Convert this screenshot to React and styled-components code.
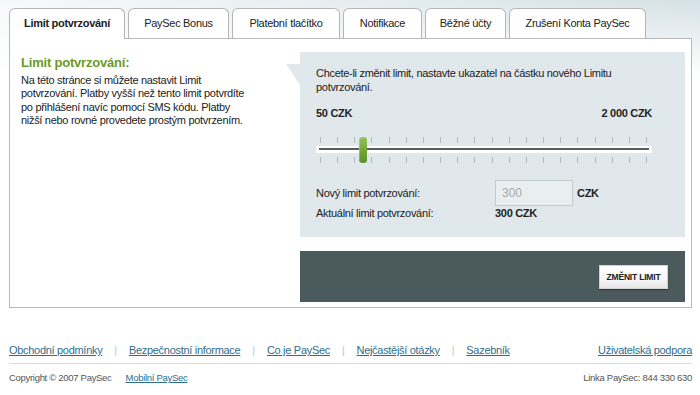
import styled, { createGlobalStyle } from "styled-components";

const GlobalStyle = createGlobalStyle`
    html, body {
        margin: 0;
        padding: 0;
    }
    body {
        font-family: "Liberation Sans", Arial, sans-serif;
        font-size: 11px;
        letter-spacing: -0.3px;
        color: #222;
        background:
            linear-gradient(to bottom, rgba(255, 255, 255, 0) 0, #fff 75px),
            linear-gradient(to right, #f6f9fa 0, #e4ecef 55%, #d5e1e6 100%);
        background-repeat: no-repeat;
        background-color: #fff;
    }
`;

const Page = styled.div`
    width: 700px;
    height: 395px;
    box-sizing: border-box;
    padding: 8px 8px 0 9px;
`;

const Tabs = styled.div`
    display: flex;
    gap: 3px;
    height: 30px;
    align-items: flex-start;
`;

const Tab = styled.div`
    position: relative;
    z-index: 1;
    width: ${(p) => p.$w}px;
    height: ${(p) => (p.$active ? 31 : 30)}px;
    box-sizing: border-box;
    border: 1px solid #b5b5b5;
    border-bottom: none;
    border-radius: 6px 6px 0 0;
    background: #fff;
    display: flex;
    align-items: center;
    justify-content: center;
    padding-bottom: ${(p) => (p.$active ? 2 : 1)}px;
    font-weight: ${(p) => (p.$active ? "bold" : "normal")};
    color: #222;
    white-space: nowrap;
`;

const Box = styled.div`
    height: 270px;
    box-sizing: border-box;
    border: 1px solid #b8b8b8;
    background: #fff;
    display: flex;
    padding: 13px 6px 0 11px;
`;

const Intro = styled.div`
    flex: 1;
    padding-top: 3px;
`;

const IntroTitle = styled.h2`
    margin: 0 0 3px;
    font-size: 13px;
    line-height: 16px;
    letter-spacing: -0.2px;
    color: #6b9a27;
    font-weight: bold;
`;

// line breaks kept as on the original page
const IntroText = styled.p`
    margin: 0;
    white-space: nowrap;
    line-height: 13.4px;
    color: #222;
`;

const Side = styled.div`
    width: 385px;
    display: flex;
    flex-direction: column;
    gap: 14px;
`;

const LimitPanel = styled.div`
    position: relative;
    height: 185px;
    box-sizing: border-box;
    background: #e1e8eb;
    padding: 14px 33px 0 16px;

    &::before {
        content: "";
        position: absolute;
        left: -14px;
        top: 12px;
        width: 14px;
        height: 21px;
        background: #e1e8eb;
        clip-path: polygon(0 0, 100% 0, 100% 100%);
    }
`;

const PanelText = styled.p`
    margin: 0;
    line-height: 14px;
    color: #222;
`;

const Range = styled.div`
    display: flex;
    justify-content: space-between;
    margin-top: 12px;
    font-weight: bold;
    line-height: 14px;
    color: #222;
`;

const Slider = styled.div`
    position: relative;
    margin-top: 17px;
    height: 26px;
    display: flex;
    flex-direction: column;
`;

const Ticks = styled.div`
    display: flex;
    justify-content: space-between;
    padding: 0 5px 0 4px;
    height: 6px;
    margin-top: ${(p) => p.$top || 0}px;
`;

const Tick = styled.span`
    width: 1px;
    height: 100%;
    background: #b3b9bc;
`;

const Track = styled.div`
    margin-top: 3px;
    height: 7px;
    box-sizing: border-box;
    background: #fff;
    padding: 2px 3px 0 3px;
`;

const TrackLine = styled.div`
    height: 2px;
    background: #5c5c5c;
`;

const Thumb = styled.div`
    position: absolute;
    left: 43px;
    top: 0;
    width: 8px;
    height: 26px;
    border-radius: 3px;
    background: linear-gradient(to bottom, #94c55c 0%, #77ab3c 45%, #5a9128 100%);
    box-shadow: inset 1px 0 0 rgba(255, 255, 255, 0.25);
`;

const FormRow = styled.div`
    display: flex;
    align-items: center;
    line-height: 14px;
    margin-top: ${(p) => p.$top || 0}px;
`;

const Label = styled.span`
    width: 179px;
    color: #222;
`;

const Amount = styled.input`
    width: 78px;
    height: 26px;
    box-sizing: border-box;
    border: 1px solid #c3cbce;
    background: #e9eef0;
    color: #a9a9a9;
    font-family: "Liberation Sans", Arial, sans-serif;
    font-size: 12px;
    padding: 0 6px;
    margin: 0;
    outline: none;
`;

const Unit = styled.span`
    margin-left: 4px;
    font-weight: bold;
`;

const Value = styled.span`
    font-weight: bold;
`;

const ActionBar = styled.div`
    height: 50px;
    background: #4b5a5c;
    display: flex;
    align-items: center;
    justify-content: flex-end;
    padding: 1px 17px 0 0;
`;

const Button = styled.button`
    width: 69px;
    height: 24px;
    border: 1px solid #d2d2d2;
    background: linear-gradient(to bottom, #ffffff 0%, #f6f6f6 60%, #e6e6e6 100%);
    box-shadow: 0 1px 1px rgba(0, 0, 0, 0.35);
    font-family: "Liberation Sans", Arial, sans-serif;
    font-size: 8.5px;
    font-weight: bold;
    letter-spacing: -0.2px;
    color: #222;
    padding: 0;
    cursor: pointer;
`;

const FooterLinks = styled.div`
    display: flex;
    align-items: center;
    padding: 35px 0 6px;
    line-height: 14px;
    letter-spacing: -0.3px;
    border-bottom: 1px solid #dcdcdc;
`;

const FooterLink = styled.a`
    color: #2f6d8c;
    text-decoration: underline;
    cursor: pointer;
    margin-left: ${(p) => (p.$right ? "auto" : "0")};
`;

const Sep = styled.span`
    color: #c6c6c6;
    margin: 0 12px;
`;

const FooterMeta = styled.div`
    display: flex;
    align-items: center;
    margin-top: 8px;
    line-height: 12px;
    font-size: 9.5px;
    color: #555;
`;

const MetaLink = styled(FooterLink)`
    margin-left: 14px;
`;

const Hotline = styled.span`
    margin-left: auto;
`;

const tabs = [
    { label: "Limit potvrzování", w: 116, active: true },
    { label: "PaySec Bonus", w: 101 },
    { label: "Platební tlačítko", w: 108 },
    { label: "Notifikace", w: 79 },
    { label: "Běžné účty", w: 81 },
    { label: "Zrušení Konta PaySec", w: 137 },
];

const links = [
    "Obchodní podmínky",
    "Bezpečnostní informace",
    "Co je PaySec",
    "Nejčastější otázky",
    "Sazebník",
];

const App = () => {
    const ticks = Array.from({ length: 20 });

    return (
        <Page>
            <GlobalStyle />
            <Tabs>
                {tabs.map((t) => (
                    <Tab key={t.label} $w={t.w} $active={t.active}>
                        {t.label}
                    </Tab>
                ))}
            </Tabs>
            <Box>
                <Intro>
                    <IntroTitle>Limit potvrzování:</IntroTitle>
                    <IntroText>
                        Na této stránce si můžete nastavit Limit
                        <br />
                        potvrzování. Platby vyšší než tento limit potvrdíte
                        <br />
                        po přihlášení navíc pomocí SMS kódu. Platby
                        <br />
                        nižší nebo rovné provedete prostým potvrzením.
                    </IntroText>
                </Intro>
                <Side>
                    <LimitPanel>
                        <PanelText>
                            Chcete-li změnit limit, nastavte ukazatel na částku nového Limitu
                            potvrzování.
                        </PanelText>
                        <Range>
                            <span>50 CZK</span>
                            <span>2 000 CZK</span>
                        </Range>
                        <Slider>
                            <Ticks>
                                {ticks.map((_, i) => (
                                    <Tick key={i} />
                                ))}
                            </Ticks>
                            <Track>
                                <TrackLine />
                            </Track>
                            <Ticks $top={4}>
                                {ticks.map((_, i) => (
                                    <Tick key={i} />
                                ))}
                            </Ticks>
                            <Thumb />
                        </Slider>
                        <FormRow $top={17}>
                            <Label>Nový limit potvrzování:</Label>
                            <Amount defaultValue="300" readOnly />
                            <Unit>CZK</Unit>
                        </FormRow>
                        <FormRow $top={0}>
                            <Label>Aktuální limit potvrzování:</Label>
                            <Value>300 CZK</Value>
                        </FormRow>
                    </LimitPanel>
                    <ActionBar>
                        <Button>ZMĚNIT LIMIT</Button>
                    </ActionBar>
                </Side>
            </Box>
            <FooterLinks>
                {links.map((l, i) => (
                    <span key={l}>
                        {i > 0 && <Sep>|</Sep>}
                        <FooterLink>{l}</FooterLink>
                    </span>
                ))}
                <FooterLink $right>Uživatelská podpora</FooterLink>
            </FooterLinks>
            <FooterMeta>
                <span>Copyright © 2007 PaySec</span>
                <MetaLink>Mobilní PaySec</MetaLink>
                <Hotline>Linka PaySec: 844 330 630</Hotline>
            </FooterMeta>
        </Page>
    );
};

export default App;
